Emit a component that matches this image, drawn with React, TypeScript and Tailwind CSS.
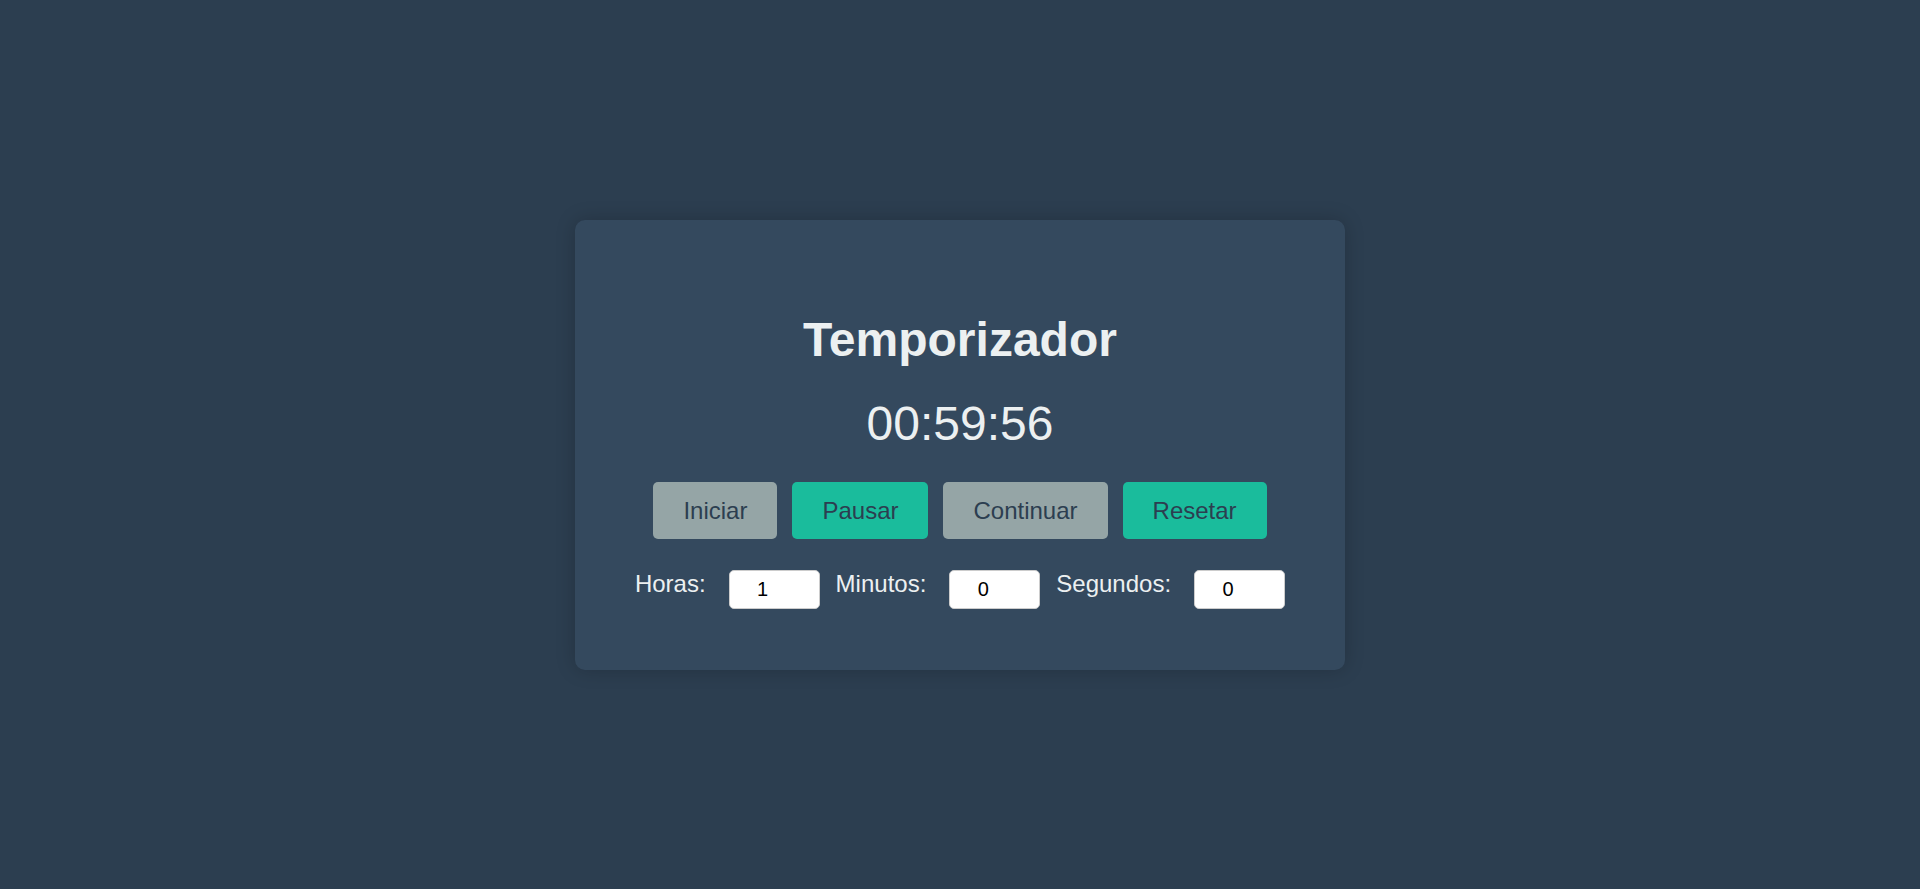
import React, { useState } from 'react';

const fmt = (n: number) => String(n).padStart(2, '0');

export default function App() {
  const [horas, setHoras] = useState('1');
  const [minutos, setMinutos] = useState('0');
  const [segundos, setSegundos] = useState('0');
  const [restante] = useState(3596);

  const h = Math.floor(restante / 3600);
  const m = Math.floor((restante % 3600) / 60);
  const s = restante % 60;

  const btnBase = 'px-[30px] py-[15px] rounded-[5px] text-[24px] leading-[1.15] text-[#2c3e50] cursor-pointer';
  const inputCls = 'w-[91px] h-[39px] pl-[4px] pr-[12px] bg-white border border-[#ccc] rounded-[5px] text-[20px] text-black text-center';

  return (
    <div className="min-h-screen w-full bg-[#2c3e50] flex items-center justify-center font-['Liberation_Sans',Arial,sans-serif]">
      <div className="w-[770px] h-[450px] bg-[#34495e] rounded-[10px] shadow-[0_0_20px_rgba(0,0,0,0.2)] flex flex-col items-center pt-[92px]">
        <h1 className="text-[48px] leading-[1.15] font-bold text-[#ecf0f1]">Temporizador</h1>
        <div className="mt-[29px] text-[48px] leading-[1.15] text-[#ecf0f1]">
          {fmt(h)}:{fmt(m)}:{fmt(s)}
        </div>

        <div className="mt-[31px] flex gap-[15px]">
          <button className={`${btnBase} bg-[#95a5a6]`}>Iniciar</button>
          <button className={`${btnBase} bg-[#1abc9c]`}>Pausar</button>
          <button className={`${btnBase} bg-[#95a5a6]`}>Continuar</button>
          <button className={`${btnBase} bg-[#1abc9c]`}>Resetar</button>
        </div>

        <div className="mt-[31px] flex items-start">
          <label className="text-[24px] leading-[1.15] text-[#ecf0f1] mr-[23px]">Horas:</label>
          <input
            type="number"
            value={horas}
            onChange={(e) => setHoras(e.target.value)}
            className={`${inputCls} mr-[16px]`}
          />
          <label className="text-[24px] leading-[1.15] text-[#ecf0f1] mr-[23px]">Minutos:</label>
          <input
            type="number"
            value={minutos}
            onChange={(e) => setMinutos(e.target.value)}
            className={`${inputCls} mr-[16px]`}
          />
          <label className="text-[24px] leading-[1.15] text-[#ecf0f1] mr-[23px]">Segundos:</label>
          <input
            type="number"
            value={segundos}
            onChange={(e) => setSegundos(e.target.value)}
            className={inputCls}
          />
        </div>
      </div>
    </div>
  );
}
